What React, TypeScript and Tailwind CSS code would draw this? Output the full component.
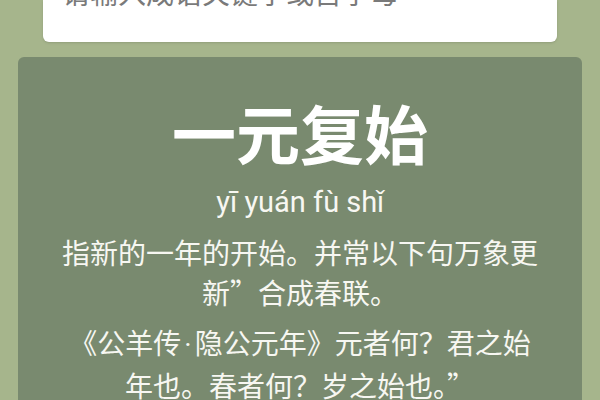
export default function App() {
  return (
    <div className="w-[600px] h-[400px] overflow-hidden bg-[#a6b58c] font-['Noto_Sans_CJK_SC',sans-serif]">
      <div className="mx-[43px] h-[42px] overflow-hidden rounded-b-md bg-white px-[19px] shadow-sm">
        <div className="-mt-[26px] text-[28px] leading-[36px] text-[#7a7a7a] whitespace-nowrap">
          请输入成语关键字或首字母
        </div>
      </div>

      <div className="mx-[18px] mt-[15px] h-[400px] rounded-t-md bg-[#798a6f] px-[42px] pt-[42px] text-center text-[#f7f7f2]">
        <h1 className="text-[64px] font-bold leading-[64px] text-white">一元复始</h1>
        <p className="mt-[22px] font-['Roboto',sans-serif] text-[29px] leading-[35px]">yī yuán fù shǐ</p>
        <p className="mt-[12px] text-[28px] leading-[40px]">指新的一年的开始。并常以下句万象更新”合成春联。</p>
        <p className="mt-[10px] text-[28px] leading-[40px]">
          《公羊传<span className="mx-[3px] font-['Roboto',sans-serif]">·</span>隐公元年》元者何？君之始年也。春者何？岁之始也。”
        </p>
      </div>
    </div>
  )
}
